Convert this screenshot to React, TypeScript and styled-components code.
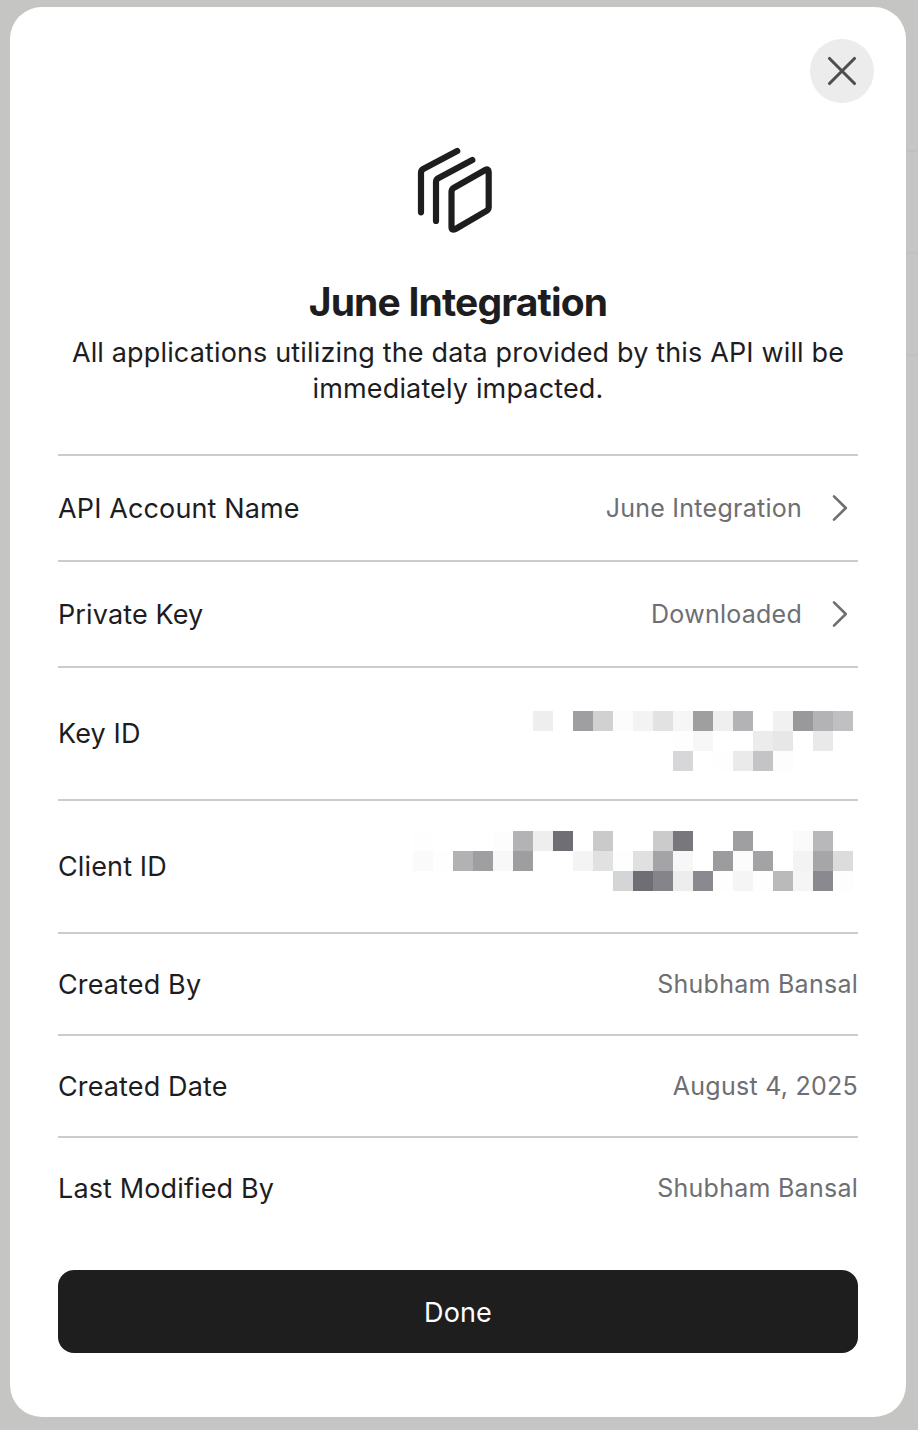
import React from "react";
import styled, { createGlobalStyle } from "styled-components";

const GlobalStyle = createGlobalStyle`
  *, *::before, *::after { box-sizing: border-box; }
  body {
    margin: 0;
    font-family: Inter, "Liberation Sans", sans-serif;
    color: #1d1d1f;
    background: #c5c5c3;
  }
`;

const Backdrop = styled.div`
  height: 1430px;
  padding: 7px 12px 13px 10px;
  background:
    linear-gradient(#c0c0be, #c0c0be) right 0 top 150px / 12px 2px no-repeat,
    linear-gradient(#c0c0be, #c0c0be) right 0 top 252px / 12px 2px no-repeat,
    linear-gradient(#c0c0be, #c0c0be) right 0 top 354px / 12px 2px no-repeat,
    #c5c5c3;
`;

const Dialog = styled.section`
  display: flex;
  flex-direction: column;
  height: 1410px;
  padding: 32px 48px 64px;
  border-radius: 32px;
  background: #fff;
`;

const CloseButton = styled.button`
  display: flex;
  align-items: center;
  justify-content: center;
  align-self: flex-end;
  width: 64px;
  height: 64px;
  margin-right: -16px;
  padding: 0;
  border: 0;
  border-radius: 50%;
  background: #ececec;
`;

const Header = styled.header`
  display: flex;
  flex-direction: column;
  align-items: center;
  height: 351px;
  padding-top: 27px;
  text-align: center;
`;

const Logo = styled.svg`
  display: block;
  width: 110px;
  height: 120px;
  margin-right: 6px;
`;

const Title = styled.h1`
  margin: 28px 0 0;
  font-size: 39px;
  font-weight: 700;
  line-height: 48px;
  letter-spacing: -0.83px;
  white-space: nowrap;
`;

const Description = styled.p`
  margin: 9px 0 0;
  font-size: 27px;
  line-height: 36px;
  letter-spacing: 0.15px;
  white-space: nowrap;
`;

const Row = styled.div<{ $height: number }>`
  display: flex;
  align-items: center;
  justify-content: space-between;
  height: ${(p) => p.$height}px;
  border-top: 2px solid #cccccc;
`;

const Label = styled.span`
  padding-top: 1.2px;
  font-size: 27px;
  line-height: 36px;
  letter-spacing: 0.13px;
  white-space: nowrap;
`;

const Value = styled.span`
  display: flex;
  align-items: center;
  color: #6e6e73;
  font-size: 25px;
  line-height: 34px;
  letter-spacing: 0.26px;
  white-space: nowrap;
`;

const Chevron = styled.svg`
  width: 20px;
  height: 30px;
  margin: 0 8px 0 28px;
`;

const Mosaic = styled.div<{ $columns: number; $offset: number }>`
  display: grid;
  grid-template-columns: repeat(${(p) => p.$columns}, 20px);
  grid-auto-rows: 20px;
  align-self: flex-start;
  margin: ${(p) => p.$offset}px 5px 0 0;
`;

const Cell = styled.i<{ $color: string }>`
  background: #${(p) => p.$color};
`;

const DoneButton = styled.button`
  height: 83px;
  margin-top: 32px;
  padding: 2px 0 0;
  border: 0;
  border-radius: 16px;
  background: #1e1e1e;
  color: #fff;
  font: inherit;
  font-size: 27px;
  letter-spacing: 0.13px;
`;

const keyCells = `
eee fff 9f9fa1 d1d1d1 fcfcfc f3f3f3 e2e2e2 f6f6f6 9f9fa1 efefef b3b3b5 fff f1f1f1 99999b b3b3b5 c0c0c2
fff fff fff fff fff fff fff fefefe f7f7f7 fff fff ececec e7e7e7 fff e9e9e9 fff
fff fff fff fff fff fff fff d7d7d9 fff fefefe eaeaea c4c4c6 fdfdfd fff fff fff`;

const clientCells = `
fefefe fff fff fff fdfdfd b3b3b5 eee 6f6e74 fff cacaca fff fff cbcbcb 78777c fff fff 9f9fa1 fff fff fafafa b8b8ba fff
fafafa fefefe b2b2b4 9f9fa1 f8f8f8 9e9ea0 fff fff f4f4f4 e1e1e1 fdfffe e0e0e0 a4a4a6 f7f7f7 fff 9c9c9e fcfcfc a3a3a5 fff f3f3f3 a6a6a8 dcdcdc
fff fff fff fff fff fff fff fff fff fff d4d5d7 6f6e74 858489 ededed 8a898f fefefe f5f5f5 fefefe bababa f5f5f5 8a898f fdfdfd`;

function Redacted({ cells, columns, offset }: { cells: string; columns: number; offset: number }) {
  return (
    <Mosaic $columns={columns} $offset={offset}>
      {cells.trim().split(/\s+/).map((color, i) => (
        <Cell key={i} $color={color} />
      ))}
    </Mosaic>
  );
}

function LinkValue({ children }: { children: React.ReactNode }) {
  return (
    <Value>
      {children}
      <Chevron viewBox="0 0 20 30" fill="none" stroke="#6e6e73" strokeWidth="2.6" strokeLinecap="round" strokeLinejoin="round">
        <path d="M4 3.3 L15.8 15 L4 26.7" />
      </Chevron>
    </Value>
  );
}

export default function App() {
  return (
    <>
      <GlobalStyle />
      <Backdrop>
        <Dialog role="dialog" aria-label="June Integration">
          <CloseButton aria-label="Close">
            <svg width="32" height="32" viewBox="0 0 32 32" fill="none" stroke="#4e4e50" strokeWidth="3.1" strokeLinecap="round">
              <path d="M3.5 3.5 L28.5 28.5 M28.5 3.5 L3.5 28.5" />
            </svg>
          </CloseButton>
          <Header>
            <Logo viewBox="0 0 110 120" fill="none" stroke="#1e1e1e" strokeWidth="6.2" strokeLinecap="round" strokeLinejoin="round">
              <path d="M21 82.3 V43 Q21 40.3 23.2 39 L57.2 21" />
              <path d="M36 91 V52 Q36 49.5 38.2 48.2 L72.3 29.9" />
              <path d="M54 57.7 L85.2 40 Q88.7 38.3 88.7 42 V77 Q88.7 79.6 86.5 80.9 L55.5 99 Q51.5 101 51.5 97 V62 Q51.5 59.2 54 57.7Z" />
            </Logo>
            <Title>June Integration</Title>
            <Description>
              All applications utilizing the data provided by this API will be
              <br />
              immediately impacted.
            </Description>
          </Header>
          <Row $height={106}>
            <Label>API Account Name</Label>
            <LinkValue>June Integration</LinkValue>
          </Row>
          <Row $height={106}>
            <Label>Private Key</Label>
            <LinkValue>Downloaded</LinkValue>
          </Row>
          <Row $height={133}>
            <Label>Key ID</Label>
            <Redacted cells={keyCells} columns={16} offset={43} />
          </Row>
          <Row $height={133}>
            <Label>Client ID</Label>
            <Redacted cells={clientCells} columns={22} offset={30} />
          </Row>
          <Row $height={102}>
            <Label>Created By</Label>
            <Value>Shubham Bansal</Value>
          </Row>
          <Row $height={102}>
            <Label>Created Date</Label>
            <Value>August 4, 2025</Value>
          </Row>
          <Row $height={102}>
            <Label>Last Modified By</Label>
            <Value>Shubham Bansal</Value>
          </Row>
          <DoneButton>Done</DoneButton>
        </Dialog>
      </Backdrop>
    </>
  );
}
